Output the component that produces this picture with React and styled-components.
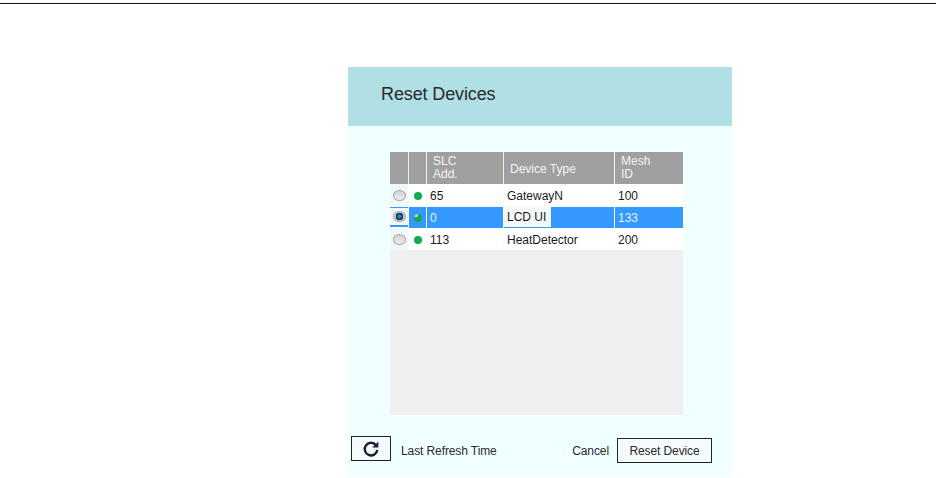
import React from "react";
import styled, { createGlobalStyle } from "styled-components";

const GlobalStyle = createGlobalStyle`
  html, body {
    margin: 0;
    padding: 0;
    background: #fff;
    font-family: "Liberation Sans", Arial, sans-serif;
  }
`;

const devices = [
  { id: 65, type: "GatewayN", mesh: 100 },
  { id: 0, type: "LCD UI", mesh: 133, selected: true },
  { id: 113, type: "HeatDetector", mesh: 200 },
];

export default function App() {
  return (
    <Page>
      <GlobalStyle />
      <TopRule />
      <Dialog>
        <DialogHeader>Reset Devices</DialogHeader>
        <DialogBody>
          <Grid>
            <HeadRow>
              <HeadCell />
              <HeadCell />
              <HeadCell $pad={6}>SLC<br />Add.</HeadCell>
              <HeadCell $pad={6} $single>Device Type</HeadCell>
              <HeadCell $pad={6}>Mesh<br />ID</HeadCell>
            </HeadRow>
            {devices.map((d) => (
              <Row key={d.id}>
                <RadioCell $selected={d.selected}>
                  <Radio $selected={d.selected} />
                </RadioCell>
                <Cell $selected={d.selected} $center>
                  <Dot $selected={d.selected} />
                </Cell>
                <Cell $selected={d.selected}>{d.id}</Cell>
                <Cell $selected={d.selected}>
                  {d.selected ? <EditBox>{d.type}</EditBox> : d.type}
                </Cell>
                <Cell $selected={d.selected}>{d.mesh}</Cell>
              </Row>
            ))}
          </Grid>
          <Footer>
            <RefreshButton aria-label="Refresh">
              <svg width="18" height="18" viewBox="0 0 18 18" fill="none">
                <path
                  d="M14 5.2A6.3 6.3 0 1 0 15.3 10"
                  stroke="#1c1c40"
                  strokeWidth="2.4"
                />
                <path d="M16.4 1.4v6.2h-6.2z" fill="#1c1c40" />
              </svg>
            </RefreshButton>
            <RefreshLabel>Last Refresh Time</RefreshLabel>
            <CancelLink>Cancel</CancelLink>
            <ResetButton>Reset Device</ResetButton>
          </Footer>
        </DialogBody>
      </Dialog>
    </Page>
  );
}

const Page = styled.div`
  width: 936px;
  height: 478px;
  overflow: hidden;
  padding-top: 3px;
  box-sizing: border-box;
`;

const TopRule = styled.div`
  height: 1px;
  background: #111;
`;

const Dialog = styled.div`
  width: 384px;
  height: 410px;
  margin: 63px 0 0 348px;
  background: #f0ffff;
  display: flex;
  flex-direction: column;
`;

const DialogHeader = styled.div`
  height: 59px;
  flex: none;
  box-sizing: border-box;
  padding: 17px 0 0 33px;
  background: #b0dfe5;
  color: #2a2a2a;
  font-size: 18px;
  line-height: 21px;
  letter-spacing: -0.12px;
`;

const DialogBody = styled.div`
  flex: 1;
  display: flex;
  flex-direction: column;
  padding: 26px 0 0 3px;
`;

const Grid = styled.div`
  width: 293px;
  height: 263px;
  margin-left: 39px;
  background: #efefef;
  font-size: 12px;
  color: #111;
`;

const columns = "18px 17px 76px 110px 68px";

const HeadRow = styled.div`
  display: grid;
  grid-template-columns: ${columns};
  column-gap: 1px;
  height: 32px;
  background: #f0f0f0;
`;

const HeadCell = styled.div`
  background: #a0a0a0;
  color: #f4f4f4;
  line-height: 13px;
  box-sizing: border-box;
  padding: ${(p) => (p.$single ? "11px" : "3px")} 0 0 ${(p) => p.$pad || 0}px;
`;

const Row = styled.div`
  display: grid;
  grid-template-columns: ${columns};
  grid-template-rows: 22px;
  column-gap: 1px;
  height: 22px;
  background: #f7fdfd;
`;

const Cell = styled.div`
  display: flex;
  align-items: center;
  justify-content: ${(p) => (p.$center ? "center" : "flex-start")};
  box-sizing: border-box;
  border-top: 1px solid ${(p) => (p.$selected ? "#f7fdfd" : "#fff")};
  padding-left: ${(p) => (p.$center ? 0 : 3)}px;
  white-space: nowrap;
  background: ${(p) => (p.$selected ? "#3399ff" : "#fff")};
  color: ${(p) => (p.$selected ? "#e6f2ff" : "#1a1a1a")};
`;

const RadioCell = styled.div`
  display: flex;
  align-items: center;
  justify-content: center;
  box-sizing: border-box;
  background: #f0f8fb;
  background-clip: padding-box;
  border-top: ${(p) => (p.$selected ? "1px solid #3399ff" : "0")};
  border-bottom: ${(p) => (p.$selected ? "2px solid #3399ff" : "0")};
  margin: ${(p) => (p.$selected ? "1px 0 1px" : "0")};
`;

const Radio = styled.span`
  width: 13px;
  height: 11px;
  box-sizing: border-box;
  border-radius: 50%;
  border: 1px solid #a8a8a8;
  background: ${(p) =>
    p.$selected
      ? "radial-gradient(circle, #1c8cc4 0 26%, #1b3a55 32% 50%, #c8c8c8 56%)"
      : "linear-gradient(#d4d4d4, #ececec)"};
`;

const Dot = styled.span`
  width: 8px;
  height: 8px;
  border-radius: 50%;
  background: ${(p) =>
    p.$selected
      ? "radial-gradient(circle at 25% 15%, #9fd0d8 0 18%, #12a84c 30%)"
      : "#12a84c"};
`;

const EditBox = styled.span`
  align-self: stretch;
  display: flex;
  align-items: center;
  width: 47px;
  margin: 0 0 1px -3px;
  padding-left: 3px;
  box-sizing: border-box;
  background: #f4f8f8;
  color: #1a1a1a;
`;

const Footer = styled.div`
  display: flex;
  align-items: flex-start;
  margin-top: 21px;
  font-size: 12px;
  line-height: 14px;
  letter-spacing: -0.1px;
  color: #2a2a2a;
`;

const RefreshButton = styled.button`
  width: 40px;
  height: 25px;
  padding: 0;
  display: flex;
  align-items: center;
  justify-content: center;
  background: #f4fbfb;
  border: 1px solid #222;
  border-radius: 0;
`;

const RefreshLabel = styled.span`
  margin: 8px 0 0 10px;
`;

const CancelLink = styled.span`
  margin: 8px 0 0 auto;
`;

const ResetButton = styled.button`
  width: 95px;
  height: 25px;
  margin: 2px 20px 0 8px;
  padding: 0;
  background: #f4fbfb;
  border: 1px solid #222;
  border-radius: 0;
  font: inherit;
  letter-spacing: inherit;
  color: #2a2a2a;
`;
